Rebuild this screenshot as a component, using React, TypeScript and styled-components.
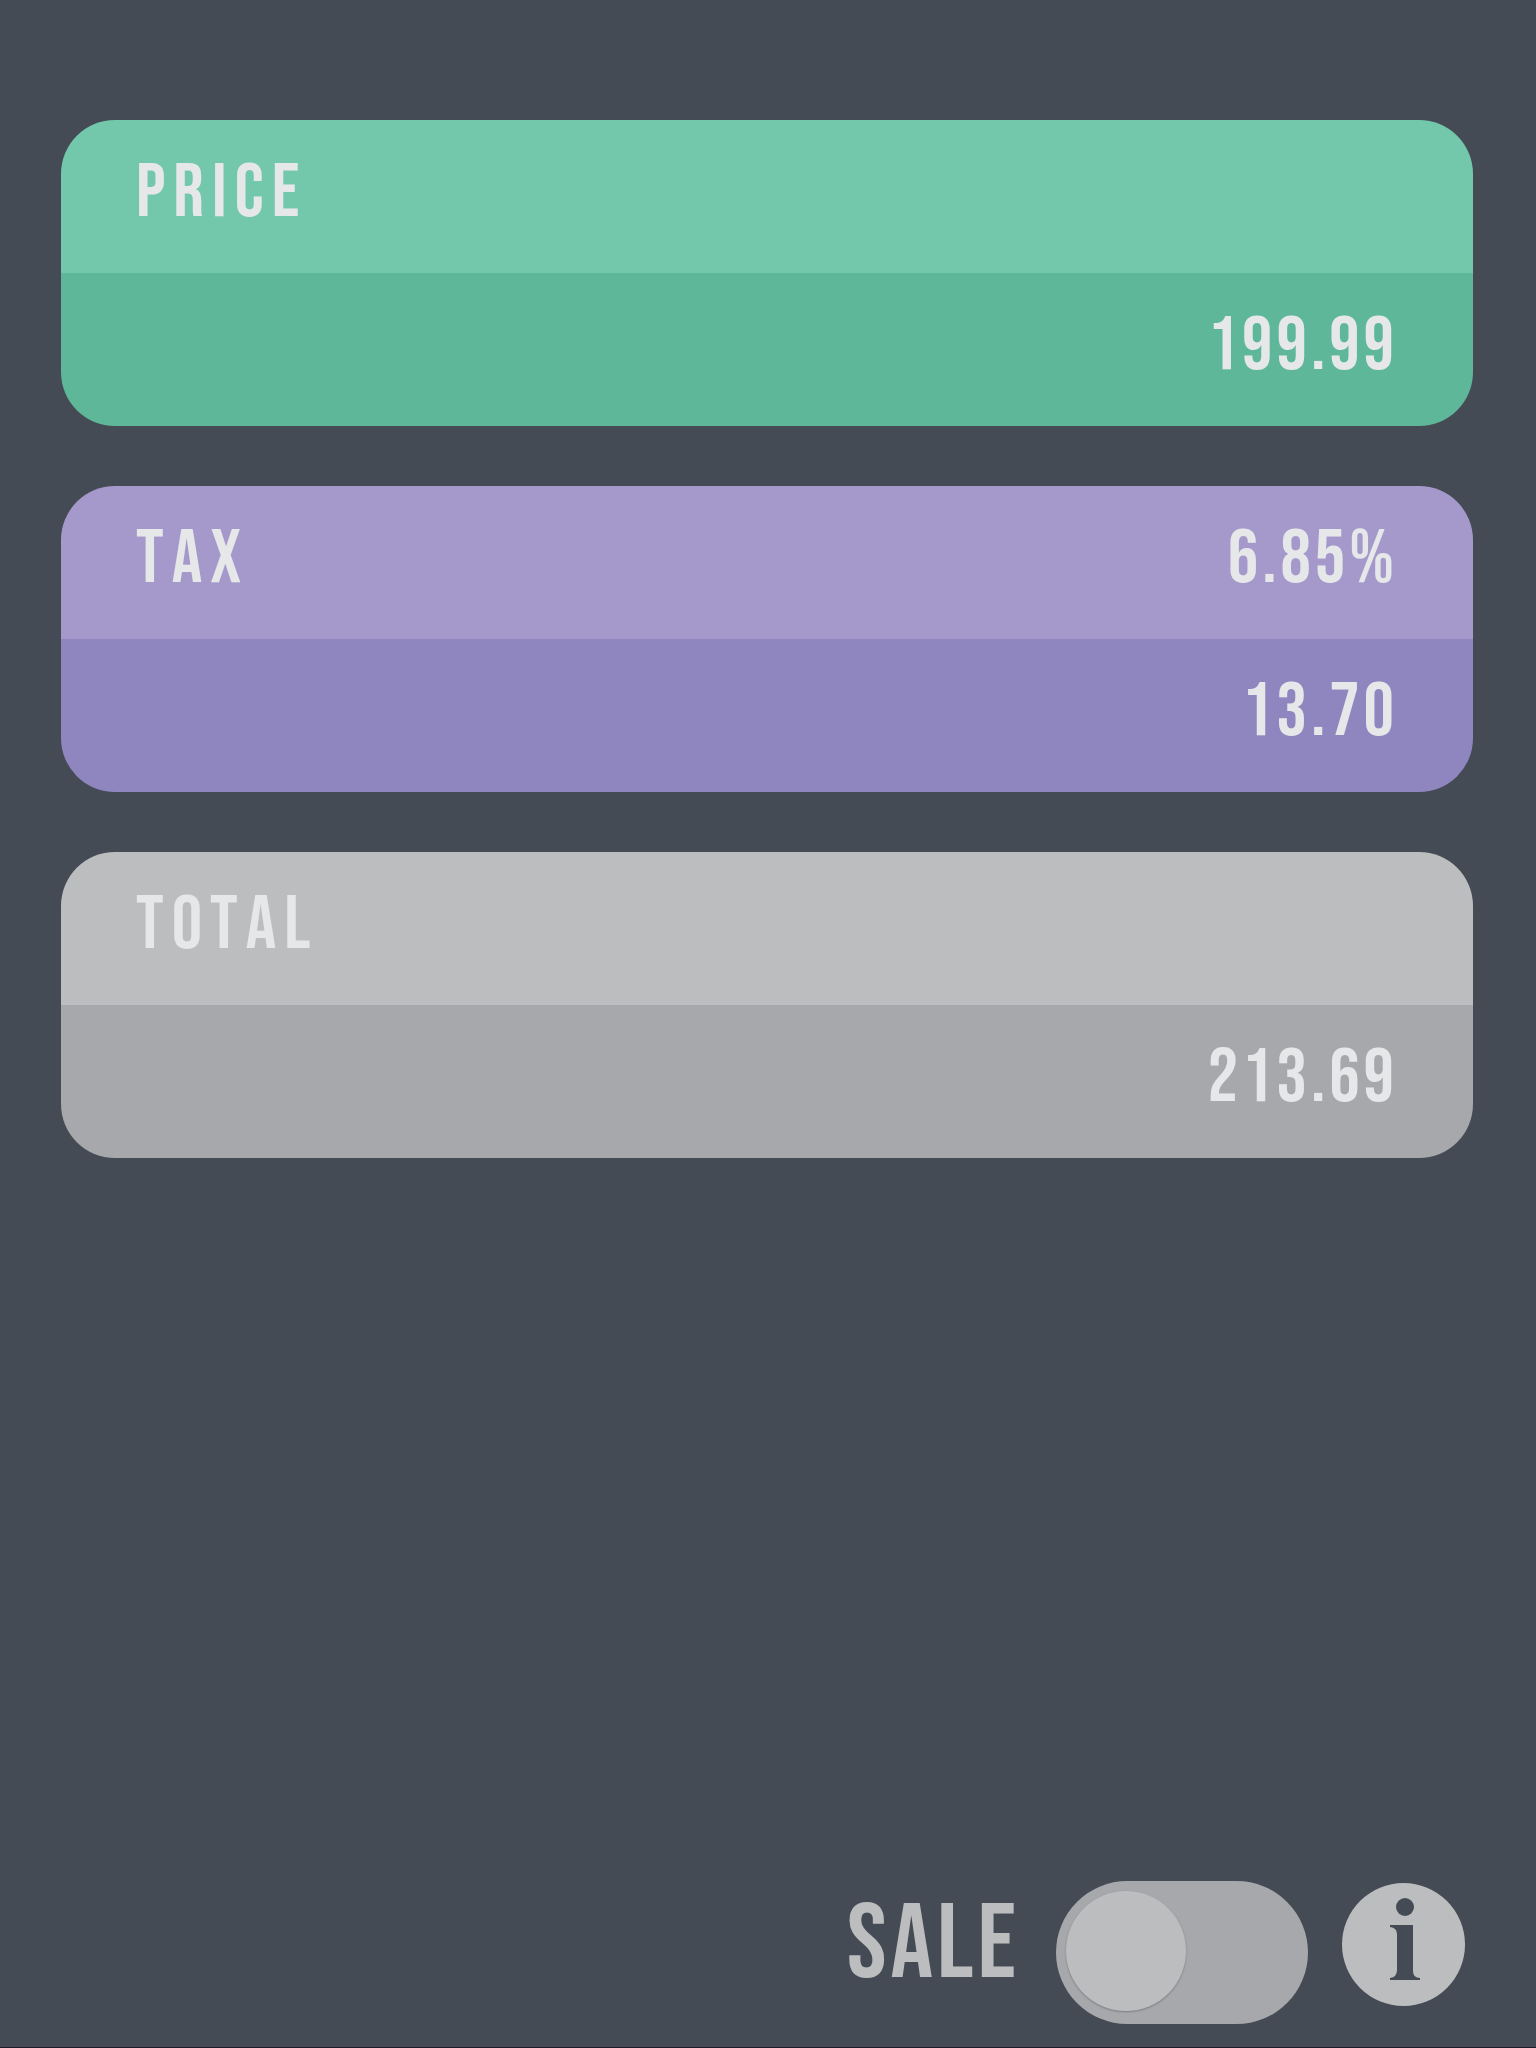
import React, { useState } from "react";
import styled, { createGlobalStyle } from "styled-components";

const GlobalStyle = createGlobalStyle`
  *, *::before, *::after { box-sizing: border-box; }
  body { margin: 0; background: #454b55; }
`;

const Page = styled.div`
  min-height: 100vh;
  display: flex;
  flex-direction: column;
  justify-content: space-between;
  gap: 60px;
  padding-top: 120px;
  border-bottom: 1px solid #1e1c28;
  background: #454b55;
  color: #e6e7e9;
  font-family: "Bebas Neue", "Liberation Sans Narrow", "Roboto Condensed", "Liberation Sans", sans-serif;
  font-size: 76px;
  font-kerning: none;
  line-height: 80px;
  letter-spacing: 4px;
`;

const Cards = styled.main`
  display: flex;
  flex-direction: column;
  gap: 60px;
  padding: 0 63px 0 61px;
`;

const Card = styled.section`
  border-radius: 54px;
  overflow: hidden;
`;

const Band = styled.div<{ $color: string }>`
  display: flex;
  align-items: center;
  justify-content: space-between;
  height: 153px;
  padding: 0 75px 6px;
  background: ${(p) => p.$color};
`;

const Name = styled.label`
  letter-spacing: 8px;
`;

const Field = styled.input`
  flex: 1;
  min-width: 0;
  height: 80px;
  padding: 0;
  border: 0;
  outline: 0;
  background: transparent;
  color: inherit;
  font: inherit;
  font-kerning: none;
  letter-spacing: inherit;
  text-align: right;
`;

const Result = styled.output`
  flex: 1;
  text-align: right;
`;

const Footer = styled.footer`
  display: flex;
  align-items: flex-start;
  justify-content: flex-end;
  padding: 0 71px 23px;
  color: #bcbdbf;
`;

const SaleLabel = styled.label`
  margin-right: 36px;
  font-size: 106px;
  line-height: 130px;
`;

const Switch = styled.input`
  appearance: none;
  width: 252px;
  height: 143px;
  margin: 0 34px 0 0;
  padding: 10px;
  border-radius: 72px;
  background: #a7a8ab;
  cursor: pointer;

  &::before {
    content: "";
    display: block;
    width: 120px;
    height: 120px;
    border-radius: 50%;
    background: #bcbdbf;
    box-shadow: 0 1px 2px rgba(60, 60, 70, 0.4);
  }

  &:checked::before {
    margin-left: auto;
  }
`;

const InfoButton = styled.button`
  width: 123px;
  height: 123px;
  margin-top: 2px;
  padding: 0;
  border: 0;
  border-radius: 50%;
  background: #bcbdbf;
  color: #454b55;
  cursor: pointer;

  svg {
    display: block;
  }
`;

const InfoIcon = () => (
  <svg width="123" height="123" viewBox="0 0 123 123" fill="currentColor" aria-hidden="true">
    <circle cx="63" cy="24" r="9" />
    <path d="M48 42H71V88Q71 95 78 95V97H48V95Q55 94 55 87V51Q55 45 48 44Z" />
  </svg>
);

export default function App() {
  const [price, setPrice] = useState("199.99");
  const [rate, setRate] = useState("6.85%");
  const [sale, setSale] = useState(false);

  const base = parseFloat(price) || 0;
  const tax = (base * (parseFloat(rate) || 0)) / 100;

  return (
    <Page>
      <GlobalStyle />
      <Cards>
        <Card>
          <Band $color="#73c8ac">
            <Name htmlFor="price">PRICE</Name>
          </Band>
          <Band $color="#5fb79a">
            <Field id="price" inputMode="decimal" value={price} onChange={(e) => setPrice(e.target.value)} />
          </Band>
        </Card>
        <Card>
          <Band $color="#a599cb">
            <Name htmlFor="rate">TAX</Name>
            <Field id="rate" inputMode="decimal" value={rate} onChange={(e) => setRate(e.target.value)} />
          </Band>
          <Band $color="#8f86bf">
            <Result htmlFor="price rate">{tax.toFixed(2)}</Result>
          </Band>
        </Card>
        <Card>
          <Band $color="#bcbdbf">
            <Name htmlFor="total">TOTAL</Name>
          </Band>
          <Band $color="#a7a8ab">
            <Result id="total" htmlFor="price rate">{(base + tax).toFixed(2)}</Result>
          </Band>
        </Card>
      </Cards>
      <Footer>
        <SaleLabel htmlFor="sale">SALE</SaleLabel>
        <Switch
          id="sale"
          type="checkbox"
          role="switch"
          checked={sale}
          onChange={(e) => setSale(e.target.checked)}
        />
        <InfoButton type="button" aria-label="Info">
          <InfoIcon />
        </InfoButton>
      </Footer>
    </Page>
  );
}
